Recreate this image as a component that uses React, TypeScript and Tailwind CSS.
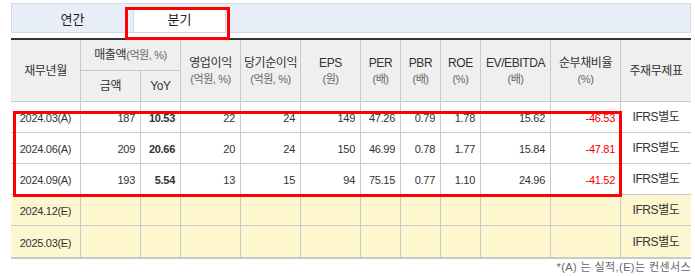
import React from "react";

const rows = [
  { date: "2024.03(A)", sales: "187", yoy: "10.53", op: "22", net: "24", eps: "149", per: "47.26", pbr: "0.79", roe: "1.78", ev: "15.62", debt: "-46.53" },
  { date: "2024.06(A)", sales: "209", yoy: "20.66", op: "20", net: "24", eps: "150", per: "46.99", pbr: "0.78", roe: "1.77", ev: "15.84", debt: "-47.81" },
  { date: "2024.09(A)", sales: "193", yoy: "5.54", op: "13", net: "15", eps: "94", per: "75.15", pbr: "0.77", roe: "1.10", ev: "24.96", debt: "-41.52" },
];

const estimates = ["2024.12(E)", "2025.03(E)"];

const font = "font-['Liberation_Sans','Noto_Sans_CJK_KR',sans-serif]";
const line = "border-[#c9c9c9]";
const head = `flex flex-col items-center justify-center bg-[#efefef] border-r border-b ${line} text-[#333] text-[12px] leading-[16px] tracking-[-0.4px]`;
const num = `flex items-center justify-end pt-[3px] pr-[5px] border-r border-b ${line} text-[11px] leading-[13px] tracking-[-0.3px] text-[#333]`;
const ifrs = `${num} !justify-center !pt-[1px] !pr-0 !border-r-0 text-[12px] !tracking-[-0.4px]`;

function Head({ top, sub }: { top: string; sub: string }) {
  return (
    <div className={`${head} row-span-2`}>
      <div>{top}</div>
      <div className="text-[11px] text-[#666]">{sub}</div>
    </div>
  );
}

export default function App() {
  return (
    <div className={`relative w-[695px] h-[276px] bg-white ${font}`}>
      {/* tabs */}
      <div className="ml-[11px] mt-[3px] w-[680px] h-[30px] border border-[#d3dae3] bg-[#e8eef8] flex items-end">
        <div className="w-[121px] h-[25px] flex items-center justify-center text-[13px] text-[#222]">연간</div>
        <div className="w-[93px] h-[25px] bg-white border-x border-t border-[#d3dae3] flex items-center justify-center text-[13px] text-[#222]">
          분기
        </div>
      </div>
      <div className="absolute left-[125px] top-[4px] w-[105px] h-[33px] border-[3px] border-[#ff0000]" />

      {/* table */}
      <div className="ml-[11px] mt-[5px] w-[680px] grid grid-cols-[70px_60px_40px_60px_60px_60px_40px_40px_40px_70px_70px_70px] auto-rows-[31px] border-t-2 border-t-[#333] border-b-2 border-b-[#c9c9c9]">
        <div className={`${head} row-span-2`}>재무년월</div>
        <div className={`${head} col-span-2 !flex-row`}>
          매출액<span className="text-[11px] text-[#666]">(억원, %)</span>
        </div>
        <Head top="영업이익" sub="(억원, %)" />
        <Head top="당기순이익" sub="(억원, %)" />
        <Head top="EPS" sub="(원)" />
        <Head top="PER" sub="(배)" />
        <Head top="PBR" sub="(배)" />
        <Head top="ROE" sub="(%)" />
        <Head top="EV/EBITDA" sub="(배)" />
        <Head top="순부채비율" sub="(%)" />
        <div className={`${head} row-span-2 !border-r-0`}>주재무제표</div>
        <div className={head}>금액</div>
        <div className={head}>YoY</div>

        {rows.map((r) => (
          <React.Fragment key={r.date}>
            <div className={`${num} !justify-center !pr-0`}>{r.date}</div>
            <div className={num}>{r.sales}</div>
            <div className={`${num} font-bold`}>{r.yoy}</div>
            <div className={num}>{r.op}</div>
            <div className={num}>{r.net}</div>
            <div className={num}>{r.eps}</div>
            <div className={num}>{r.per}</div>
            <div className={num}>{r.pbr}</div>
            <div className={num}>{r.roe}</div>
            <div className={num}>{r.ev}</div>
            <div className={`${num} !text-[#ee0000]`}>{r.debt}</div>
            <div className={ifrs}>IFRS별도</div>
          </React.Fragment>
        ))}
        {estimates.map((d, idx) => (
          <React.Fragment key={d}>
            <div className={`${num} !justify-center !pr-0 bg-[#fdf6cf] ${idx === 1 ? "!border-b-0" : ""}`}>{d}</div>
            {Array.from({ length: 10 }).map((_, i) => (
              <div key={i} className={`${num} bg-[#fdf6cf] ${idx === 1 ? "!border-b-0" : ""}`} />
            ))}
            <div className={`${ifrs} bg-[#fdf6cf] ${idx === 1 ? "!border-b-0" : ""}`}>IFRS별도</div>
          </React.Fragment>
        ))}
      </div>
      <div className="absolute left-[13px] top-[108px] w-[609px] h-[86px] border-[3px] border-[#ff0000]" />

      <p className="mt-[1px] pr-[4px] text-right text-[11px] leading-[14px] tracking-[0.4px] text-[#666]">*(A) 는 실적,(E)는 컨센서스</p>
    </div>
  );
}
